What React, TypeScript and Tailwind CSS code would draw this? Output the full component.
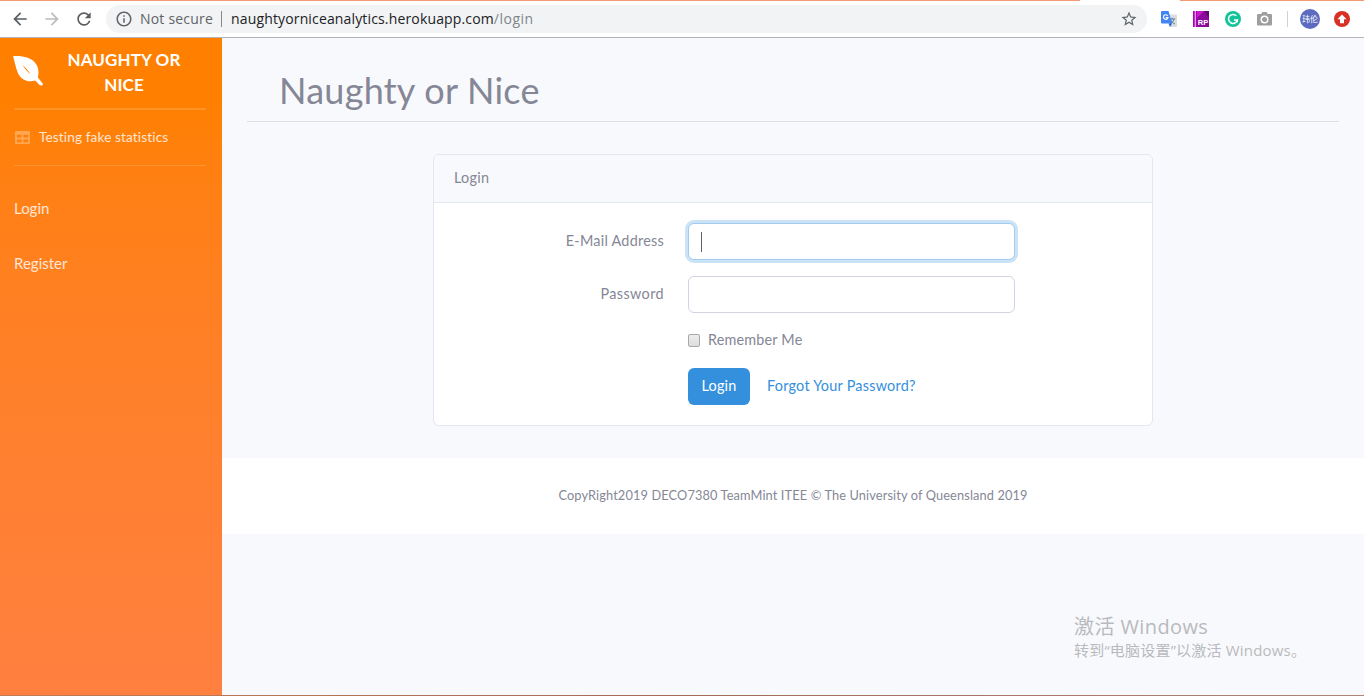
import React from 'react';
import { FaTable } from 'react-icons/fa';
import { MdArrowBack, MdArrowForward, MdRefresh, MdInfoOutline, MdStarBorder } from 'react-icons/md';

function Extensions() {
  return (
    <div className="flex items-center">
      <svg className="ml-[14px] h-4 w-4" viewBox="0 0 16 16">
        <path d="M5 3.500h10a1 1 0 0 1 1 1V15a1 1 0 0 1-1 1H9z" fill="#dadce0" />
        <path d="M8.200 8h6M11.200 6.800V8M13 8c-.5 2.400-2 4-4 5M10 9.200c.8 1.800 2 3 4 3.800" stroke="#607d8b" strokeWidth="1" fill="none" />
        <path d="M1 0h6.500l3.700 12.500H1a1 1 0 0 1-1-1V1a1 1 0 0 1 1-1z" fill="#4285f4" />
        <path d="M7.500 12.500h3.700L9 16z" fill="#3367d6" />
        <path d="M6.700 4.800A2.300 2.300 0 1 0 7 6.600H4.800" stroke="#fff" strokeWidth="1.200" fill="none" />
      </svg>
      <svg className="ml-4 h-4 w-4" viewBox="0 0 16 16">
        <path d="M0 0h16v16H0z" fill="#b100b8" />
        <path d="M4 0h12v16H4z" fill="#8b0a9b" />
        <path d="M4 0h7L4 7z" fill="#c51bd0" />
        <path d="M16 0v7L11 0z" fill="#65066f" />
        <path d="M1.800 0h.8v16h-.8z" fill="#fff" />
        <text x="4.800" y="14.300" fill="#fff" fontSize="7.500" fontWeight="700" fontFamily="Liberation Sans, sans-serif">RP</text>
      </svg>
      <svg className="ml-4 h-4 w-4" viewBox="0 0 16 16">
        <circle cx="8" cy="8" r="8" fill="#15c39a" />
        <path d="M11.300 4.800A4.500 4.500 0 1 0 12.400 9H9" stroke="#fff" strokeWidth="1.500" fill="none" />
        <path d="M12.300 8.400v3.200" stroke="#fff" strokeWidth="1.200" />
      </svg>
      <svg className="mr-px ml-4 h-[14px] w-[15px]" viewBox="0 0 15 14">
        <path d="M1 2h3.200L5.500 0h4l1.300 2H14a1 1 0 0 1 1 1v9.500a1 1 0 0 1-1 1H1a1 1 0 0 1-1-1V3a1 1 0 0 1 1-1z" fill="#9e9e9e" />
        <circle cx="7.500" cy="7.500" r="3.300" fill="none" stroke="#fff" strokeWidth="1.400" />
      </svg>
      <div className="ml-[14px] h-4 w-px bg-[#cfd1d4]" />
      <div className="ml-3 flex h-5 w-5 items-center justify-center rounded-full bg-[#5c6bc0] font-['Noto_Sans_CJK_SC',sans-serif] text-[8px] leading-none whitespace-nowrap text-white">玮伦</div>
      <svg className="ml-[14px] h-4 w-4" viewBox="0 0 16 16">
        <circle cx="8" cy="8" r="8" fill="#d93025" />
        <path d="M8 3.400l4.600 4.900H10v4H6v-4H3.400z" fill="#fff" />
      </svg>
    </div>
  );
}

function BrowserBar() {
  return (
    <header className="flex h-[38px] shrink-0 items-center border-b border-[#b2b4b9] bg-white font-['Open_Sans',sans-serif] text-[14px]">
      <MdArrowBack className="ml-[10px] h-5 w-5 text-[#5a5d62]" />
      <MdArrowForward className="ml-3 h-5 w-5 text-[#babcbe]" />
      <MdRefresh className="ml-3 h-5 w-5 text-[#5a5d62]" />
      <div className="ml-3 flex h-7 w-[1041px] items-center rounded-full bg-[#f1f3f4]">
        <MdInfoOutline className="ml-[9px] h-[18px] w-[18px] text-[#5f6368]" />
        <span className="ml-[7px] w-[73px] tracking-[0.2px] whitespace-nowrap text-[#5f6368]">Not secure</span>
        <span className="ml-2 h-4 w-px bg-[#85888c]" />
        <span className="ml-[9px] tracking-[0.21px] whitespace-nowrap text-[#202124]"><span className="tracking-[0.15px]">naughtyorniceanalytics.herokuapp.com</span><span className="tracking-[0.5px] text-[#80868b]">/login</span></span>
        <MdStarBorder className="mr-[9px] ml-auto h-[18px] w-[18px] text-[#5f6368]" />
      </div>
      <Extensions />
    </header>
  );
}

function LeafLogo() {
  return (
    <svg className="-mt-[2px] -ml-px h-[30px] w-[30px] shrink-0" viewBox="0 0 30 30">
      <path d="M0 .2C8-.3 15.500 1 20.500 5c4.500 4 6 10 4.300 16.200l5 6.500c.3.700-.1 1.700-1.300 1.900-1.100.1-1.800-.3-2.200-.8l-4.100-4.200c-4.700 1.500-9.800.8-13.700-2.700C3.500 17.500 2.800 9 0 .2z" fill="#fff" />
      <path d="M9.500 9c3 2.500 5.800 5.800 8.300 9.800-3.200-2.900-6-6.200-8.300-9.800z" fill="#ff8000" />
    </svg>
  );
}

function Sidebar() {
  return (
    <aside className="flex w-[222px] shrink-0 flex-col bg-linear-to-b from-[#ff8000] from-10% to-[#ff803f] pr-4 pl-[14px] text-white/80">
      <div className="flex h-[70px] items-center pb-[3px]">
        <LeafLogo />
        <div className="ml-4 w-[130px] text-center text-[17px] leading-[25px] font-bold tracking-[0.1px] text-white">NAUGHTY OR NICE</div>
      </div>
      <div className="h-[2px] bg-white/15" />
      <div className="flex h-[55px] items-center text-[13.6px]">
        <FaTable className="ml-[1px] h-[15px] w-[15px] text-white/30" />
        <span className="ml-[9px] tracking-[0.13px] whitespace-nowrap">Testing fake statistics</span>
      </div>
      <div className="h-px bg-white/15" />
      <a className="mt-[30px] text-[15px] leading-6">Login</a>
      <a className="mt-[31px] text-[15px] leading-6">Register</a>
    </aside>
  );
}

function LoginCard() {
  return (
    <section className="mt-8 ml-[211px] h-[272px] w-[720px] overflow-hidden rounded-[6px] border border-[#e3e6f0] bg-white text-[14.4px] leading-6 tracking-[0.25px]">
      <div className="h-12 border-b border-[#e3e6f0] bg-[#f8f9fc] px-5 py-[11px]">Login</div>
      <form className="grid grid-cols-[230px_327px] gap-x-6">
        <label className="mt-[26px] text-right">E-Mail Address</label>
        <div className="mt-5 flex h-[37px] items-center rounded-[6px] border border-[#a1cbef] bg-white px-3 shadow-[0_0_0_3px_#cbe3f6]">
          <span className="h-5 w-px bg-[#5f6171]" />
        </div>
        <label className="mt-[22px] text-right tracking-[0.4px]">Password</label>
        <div className="mt-4 h-[37px] rounded-[6px] border border-[#d1d3e2] bg-white" />
        <div className="col-start-2 mt-[15px] flex items-center">
          <span className="h-[13px] w-[12px] rounded-[2px] border border-[#a8a8a8] bg-linear-to-b from-[#ededed] to-[#dcdcdc]" />
          <span className="ml-2 tracking-[0.18px] whitespace-nowrap">Remember Me</span>
        </div>
        <div className="col-start-2 mt-4 flex items-center">
          <button type="button" className="h-[37px] w-[62px] rounded-[6px] bg-[#3490dc] pb-0.5 text-center text-white">Login</button>
          <a className="ml-[17px] pb-0.5 whitespace-nowrap text-[#3490dc]">Forgot Your Password?</a>
        </div>
      </form>
    </section>
  );
}

export default function App() {
  return (
    <div className="relative flex h-[696px] w-[1364px] flex-col overflow-hidden bg-[#f8f9fc]">
      <BrowserBar />
      <div className="absolute top-0 left-0 h-px w-[1080px] bg-[#f49a72]" />
      <div className="absolute top-0 right-0 h-px w-[184px] bg-[#f49a72]" />
      <div className="flex min-h-0 flex-1 font-[Lato,sans-serif] text-[#858796]">
        <Sidebar />
        <main className="flex flex-1 flex-col">
          <h1 className="mx-[25px] h-[84px] border-b border-[#dddfe6] pt-7 pl-8 text-[36px] leading-12 tracking-[0.25px]">Naughty or Nice</h1>
          <LoginCard />
          <footer className="mt-8 flex h-[76px] items-center justify-center bg-white text-[12.8px] tracking-[0.115px]">CopyRight2019 DECO7380 TeamMint ITEE © The University of Queensland 2019</footer>
        </main>
      </div>
      <div className="absolute top-[613px] left-[1074px] font-['Open_Sans','Noto_Sans_CJK_SC',sans-serif] text-[#b9babd]">
        <div className="text-[20px] leading-7 tracking-[0.4px] whitespace-nowrap">激活 Windows</div>
        <div className="-mt-px text-[15px] leading-5 tracking-[0.2px] whitespace-nowrap">转到“电脑设置”以激活 Windows。</div>
      </div>
      <div className="absolute bottom-0 left-0 h-px w-full bg-linear-to-r from-[#c37b55] via-[#a66a58] to-[#ad8579]" />
    </div>
  );
}
